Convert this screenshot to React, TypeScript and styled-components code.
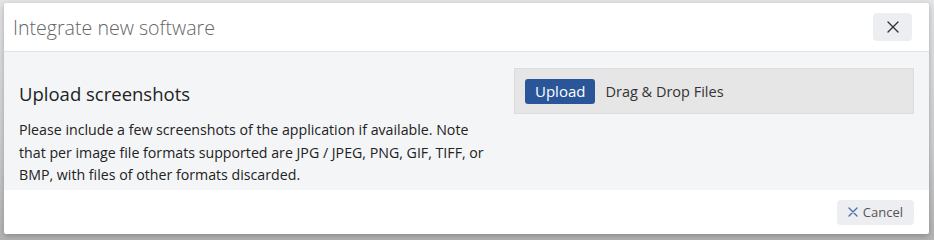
import React from 'react';
import styled, { createGlobalStyle } from 'styled-components';

const GlobalStyle = createGlobalStyle`
  html, body {
    margin: 0;
    padding: 0;
  }
  body {
    width: 934px;
    height: 240px;
    overflow: hidden;
    background: linear-gradient(180deg, #e4e5e7 0%, #cfd0d2 60%, #b4b4b4 100%);
    font-family: "Open Sans", "Noto Sans", sans-serif;
  }
`;

export default function App() {
  return (
    <>
      <GlobalStyle />
      <Backdrop>
        <Modal>
          <Header>
            <Title>Integrate new software</Title>
            <CloseButton aria-label="Close">
              <svg width="14" height="14" viewBox="0 0 14 14">
                <path d="M2 2 L12 12 M12 2 L2 12" stroke="#333" strokeWidth="1.4" strokeLinecap="round" />
              </svg>
            </CloseButton>
          </Header>

          <Body>
            <Info>
              <SectionTitle>Upload screenshots</SectionTitle>
              <Description>
                Please include a few screenshots of the application if available. Note that per image
                file formats supported are JPG / JPEG, PNG, GIF, TIFF, or BMP, with files of other
                formats discarded.
              </Description>
            </Info>
            <DropZone>
              <UploadButton>Upload</UploadButton>
              <DropText>Drag &amp; Drop Files</DropText>
            </DropZone>
          </Body>

          <Footer>
            <CancelButton>
              <svg width="10" height="10" viewBox="0 0 10 10">
                <path d="M1 1 L9 9 M9 1 L1 9" stroke="#4a6ea8" strokeWidth="1.3" strokeLinecap="round" />
              </svg>
              Cancel
            </CancelButton>
          </Footer>
        </Modal>
      </Backdrop>
    </>
  );
}

// ===== styled-components =====

const Backdrop = styled.div`
  padding: 3px 5px 6px 4px;
`;

const Modal = styled.div`
  width: 925px;
  height: 231px;
  background: #fff;
  border-radius: 2px;
  box-shadow: 0 2px 6px rgba(0, 0, 0, 0.25);
  display: flex;
  flex-direction: column;
  overflow: hidden;
`;

const Header = styled.div`
  height: 48px;
  flex: 0 0 48px;
  display: flex;
  align-items: center;
  justify-content: space-between;
  padding: 0 17px 0 9px;
  border-bottom: 1px solid #e1e3e6;
`;

const Title = styled.h2`
  margin: 0;
  font-size: 19.6px;
  font-weight: 300;
  color: #666;
`;

const CloseButton = styled.button`
  width: 39px;
  height: 28px;
  border: none;
  border-radius: 4px;
  background: #eceef1;
  display: flex;
  align-items: center;
  justify-content: center;
  padding: 0;
  cursor: pointer;
`;

const Body = styled.div`
  flex: 0 0 138px;
  background: #f4f5f7;
  display: flex;
  justify-content: space-between;
  padding: 16px 15px 0 15px;
  box-sizing: border-box;
`;

const Info = styled.div`
  width: 475px;
  padding-top: 13px;
`;

const SectionTitle = styled.h3`
  margin: 0 0 13px;
  font-size: 18.5px;
  font-weight: 400;
  color: #222;
`;

const Description = styled.p`
  margin: 0;
  font-size: 14.2px;
  line-height: 22.5px;
  color: #222;
`;

const DropZone = styled.div`
  width: 400px;
  height: 46px;
  box-sizing: border-box;
  background: #e6e6e6;
  border: 1px solid #dcdcdc;
  display: flex;
  align-items: center;
  gap: 10px;
  padding: 0 10px;
`;

const UploadButton = styled.button`
  height: 25px;
  padding: 0 10px;
  border: none;
  border-radius: 3px;
  background: #2a5699;
  color: #fff;
  font-family: inherit;
  font-size: 15px;
  cursor: pointer;
`;

const DropText = styled.span`
  font-size: 14.5px;
  color: #333;
`;

const Footer = styled.div`
  flex: 1;
  display: flex;
  align-items: center;
  justify-content: flex-end;
  padding: 0 15px;
`;

const CancelButton = styled.button`
  height: 25px;
  padding: 0 11px;
  border: none;
  border-radius: 4px;
  background: #eceef1;
  color: #555;
  font-family: inherit;
  font-size: 13px;
  display: flex;
  align-items: center;
  gap: 5px;
  cursor: pointer;
`;
